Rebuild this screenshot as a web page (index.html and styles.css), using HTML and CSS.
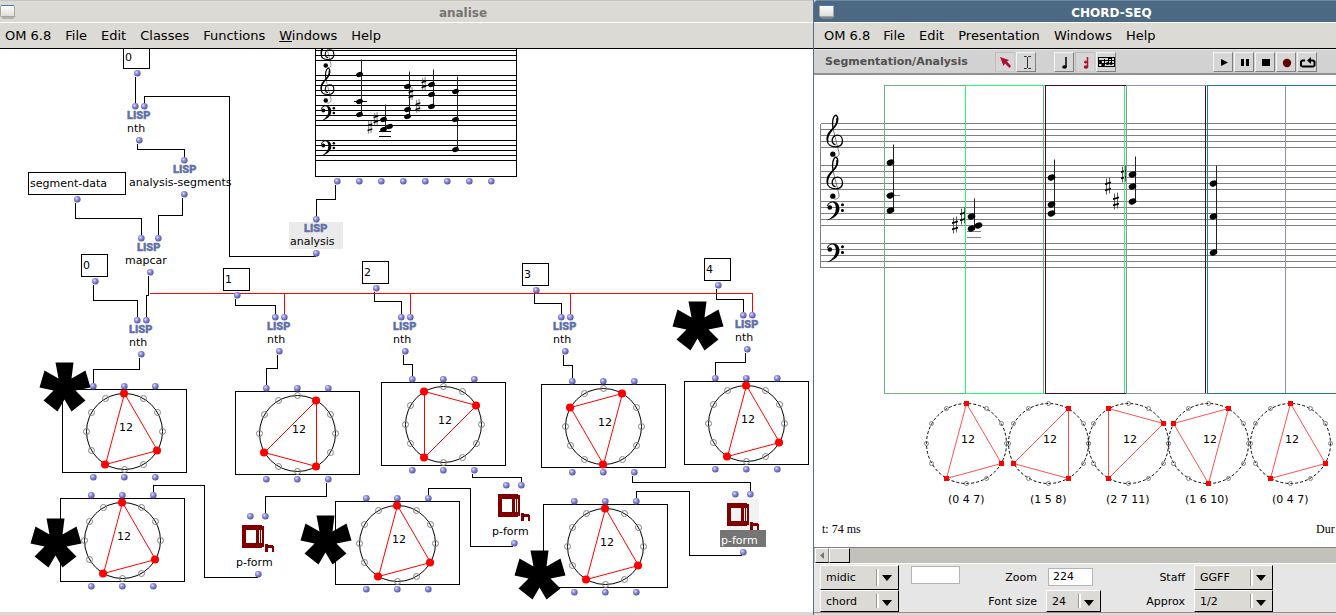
FILE: index.html
```html
<!DOCTYPE html>
<html lang="en">
<head>
<meta charset="utf-8">
<title>OM 6.8</title>
<link rel="stylesheet" href="styles.css">
</head>
<body>
<svg class="defs" aria-hidden="true">
  <defs>
    <radialGradient id="ball" cx=".38" cy=".36" r=".7">
      <stop offset="0" stop-color="#e0e0ff"/><stop offset=".4" stop-color="#8c8ce0"/><stop offset="1" stop-color="#4c4c98"/>
    </radialGradient>
    <circle id="port" cx="-.2" cy="-.2" r="3.300" fill="url(#ball)"/>
    <path id="star" d="M-10 0H8L6 16 20 8 25 25 10 28 20 38 6 49 -1 37 -8 49 -22 38 -12 28 -26 25 -21 8 -7 16Z"/>
    <g id="ports">
      <use href="#port" x="31" y="-3"/><use href="#port" x="62" y="-3"/><use href="#port" x="93" y="-3"/>
      <use href="#port" x="31" y="88"/><use href="#port" x="62" y="88"/><use href="#port" x="93" y="88"/>
    </g>
    <g id="ring">
      <rect class="box crisp" width="124" height="83"/>
      <circle class="hoop" cx="62" cy="42" r="38"/>
      <g class="hollow">
        <circle cx="62" cy="4" r="3"/><circle cx="81" cy="9" r="3"/><circle cx="95" cy="23" r="3"/><circle cx="100" cy="42" r="3"/>
        <circle cx="95" cy="61" r="3"/><circle cx="81" cy="75" r="3"/><circle cx="62" cy="80" r="3"/><circle cx="43" cy="75" r="3"/>
        <circle cx="29" cy="61" r="3"/><circle cx="24" cy="42" r="3"/><circle cx="29" cy="23" r="3"/><circle cx="43" cy="9" r="3"/>
      </g>
      <use href="#ports"/>
    </g>
    <g id="ring047"><use href="#ring"/><path class="tri" d="M62 4 95 61 43 75Z"/>
      <circle class="hit" cx="61.500" cy="4" r="4"/><circle class="hit" cx="94.500" cy="61" r="4"/><circle class="hit" cx="42.500" cy="75" r="4"/></g>
    <g id="ring158"><use href="#ring"/><path class="tri" d="M81 9V75L29 61Z"/>
      <circle class="hit" cx="80.500" cy="9" r="4"/><circle class="hit" cx="80.500" cy="75" r="4"/><circle class="hit" cx="28.500" cy="61" r="4"/></g>
    <g id="ring2711"><use href="#ring"/><path class="tri" d="M95 23 43 75V9Z"/>
      <circle class="hit" cx="94.500" cy="23" r="4"/><circle class="hit" cx="42.500" cy="75" r="4"/><circle class="hit" cx="42.500" cy="9" r="4"/></g>
    <g id="ring1610"><use href="#ring"/><path class="tri" d="M81 9 62 80 29 23Z"/>
      <circle class="hit" cx="80.500" cy="9" r="4"/><circle class="hit" cx="61.500" cy="80" r="4"/><circle class="hit" cx="28.500" cy="23" r="4"/></g>
    <g id="pform">
      <g class="crisp" transform="translate(-.5 -.5)"><path fill="#800000" fill-rule="evenodd" d="M0 0H20V1H22V22H20V23H0ZM4 5V18H14V5ZM17 5V18H18V5ZM19 5V18H20V5Z"/>
      <path fill="#800000" d="M23 19H26V20H31V21H32V27H30V23H26V27H23Z"/></g>
      <use href="#port" x="8" y="-9"/><use href="#port" x="23" y="-9"/>
    </g>
    <g id="treble">
      <path fill="none" stroke="#000" stroke-width="4" d="M20 44C15 22 20 5 28 2C37 6 35 24 27 34C16 48 2 58 2 76C2 90 13 97 27 97C41 97 48 89 48 79C48 68 41 62 33 62C23 62 17 70 17 78C17 85 21 89 27 91"/>
      <path d="M33 8C38 26 20 42 14 52C6 62 4 72 6 84C-2 78 -1 62 6 54C14 42 32 32 29 12Z"/>
      <path fill="none" stroke="#000" stroke-width="1.500" d="M20 44 37 112C40 122 34 129 24 128"/>
      <circle cx="19" cy="119" r="8"/>
    </g>
    <g id="bass">
      <circle cx="10" cy="18" r="7"/><circle cx="48" cy="10" r="4.500"/><circle cx="48" cy="27" r="4.500"/>
      <path d="M1 16C3 4 11 0 19 0C31 0 39 8 39 21C39 40 20 52 1 57C16 48 28 38 28 21C28 10 24 3 18 3C11 3 7 6 5 12Z"/>
    </g>
    <ellipse id="head" rx="3.900" ry="2.900" transform="rotate(-22)"/>
    <ellipse id="shead" rx="3.500" ry="2.500" transform="rotate(-22)"/>
    <g id="sharp"><path fill="none" stroke="#333" stroke-width=".8" d="M-1 -7V9M2 -8V8"/><path d="M-2.500 -2.200 3.500 -4V-2.200L-2.500 -.4ZM-2.500 4 3.500 2.200V4L-2.500 5.800Z"/></g>
    <g id="dial">
      <circle class="dash" r="40"/>
      <g class="hollow">
        <circle cy="-40" r="2"/><circle cx="20" cy="-35" r="2"/><circle cx="35" cy="-20" r="2"/><circle cx="40" r="2"/>
        <circle cx="35" cy="20" r="2"/><circle cx="20" cy="35" r="2"/><circle cy="40" r="2"/><circle cx="-20" cy="35" r="2"/>
        <circle cx="-35" cy="20" r="2"/><circle cx="-40" r="2"/><circle cx="-35" cy="-20" r="2"/><circle cx="-20" cy="-35" r="2"/>
      </g>
    </g>
    <path id="dot" class="hit" d="M-2.500 -2.500H2.500V2.500H-2.500Z"/>
    <g id="dial047"><use href="#dial"/><path class="tri pale" d="M0 -40 35 20 -20 35Z"/><use href="#dot" y="-40"/><use href="#dot" x="35" y="20"/><use href="#dot" x="-20" y="35"/></g>
    <linearGradient id="pane" x2="0" y2="1"><stop offset="0" stop-color="#fff"/><stop offset="1" stop-color="#dcdcd8"/></linearGradient>
    <g id="winicon"><path fill="#9a9a96" d="M0 11H16L13 14H3Z" opacity=".6"/><rect x=".5" y=".5" width="14" height="11" rx="1" fill="url(#pane)" stroke="#a4a4a0"/><path fill="#4a78b8" d="M1 0H14V1H1Z"/></g>
  </defs>
</svg>

<main class="desk">
  <section class="window patch">
    <header class="titlebar">
      <svg class="winicon"><use href="#winicon"/></svg>
      <h1>analise</h1>
    </header>
    <nav class="menubar">
      <button>OM 6.8</button><button>File</button><button>Edit</button><button>Classes</button><button>Functions</button><button><u>W</u>indows</button><button>Help</button>
    </nav>
    <svg class="canvas" role="img" aria-label="Patch diagram">
      <g transform="translate(0 -49)">
        <rect x="289" y="222" width="54" height="27" fill="#ebebeb"/>
        <rect x="727" y="499" width="32" height="31" fill="#f2f2f2"/>
        <rect x="720" y="530" width="46" height="17" fill="#757575"/>
        <g transform="translate(.5 .5)">
          <g class="box crisp">
            <rect x="123" y="46" width="26" height="22"/><rect x="28" y="172" width="97" height="22"/>
            <rect x="81" y="254" width="26" height="22"/><rect x="223" y="268" width="26" height="22"/>
            <rect x="362" y="261" width="26" height="22"/><rect x="522" y="263" width="26" height="22"/>
            <rect x="704" y="258" width="26" height="22"/><rect x="315" y="40" width="201" height="136"/>
            <path d="M315 50H516M315 55H516M315 60H516M315 75H516M315 80H516M315 85H516M315 90H516M315 95H516M315 105H516M315 110H516M315 115H516M315 120H516M315 125H516M315 140H516M315 145H516M315 150H516M315 155H516M315 160H516"/>
            <path d="M353 101H366M378 131H390M378 136H390"/>
            <path d="M135 76V102M144 102V96H229V256H315M137 143V149H184V156M182 197V215H158V234M75 202V218H141V234M148 275V295H146V316M93 284V300H137V316M139 357V369H93V382M235 298V305H275V313M277 354V368H266V384M374 291V301H401V313M403 354V364H412V375M534 293V303H561V313M563 354V365H572V377M716 288V299H743V311M745 352V362H715V374M335 184V199H316V215"/>
            <path d="M153 491V485H204V577H257M326 482V496H265V512M472 473V477H521V481M428 494V488H470V546H512M632 475V482H750V490M636 497V491H689V555H741"/>
          </g>
          <path class="tri crisp" d="M149 293H752M284 293V313M410 293V313M570 293V313M752 293V311"/>
          <g>
            <use href="#treble" transform="translate(320 32) scale(.278)"/>
            <use href="#treble" transform="translate(320 67) scale(.278)"/>
            <use href="#bass" transform="translate(320 105) scale(.278)"/>
            <use href="#bass" transform="translate(320 140) scale(.278)"/>
            <path class="stem" d="M361 59V114M385 104V129M409 71V116M433 69V106M457 76V149"/>
            <use href="#shead" x="359" y="74"/><use href="#shead" x="359" y="101"/><use href="#shead" x="359" y="114"/>
            <use href="#shead" x="383" y="119"/><use href="#shead" x="389" y="126"/><use href="#shead" x="383" y="129"/>
            <use href="#shead" x="407" y="86"/><use href="#shead" x="407" y="109"/><use href="#shead" x="407" y="116"/>
            <use href="#shead" x="431" y="84"/><use href="#shead" x="431" y="94"/><use href="#shead" x="431" y="106"/>
            <use href="#shead" x="455" y="91"/><use href="#shead" x="455" y="119"/><use href="#shead" x="455" y="149"/>
            <use href="#sharp" transform="translate(375 118) scale(.8)"/><use href="#sharp" transform="translate(369 126) scale(.8)"/>
            <use href="#sharp" transform="translate(423 83) scale(.8)"/><use href="#sharp" transform="translate(410 93) scale(.8)"/><use href="#sharp" transform="translate(417 105) scale(.8)"/>
          </g>
          <use href="#star" x="65" y="362"/><use href="#star" x="56" y="518"/><use href="#star" x="326" y="515"/><use href="#star" x="698" y="301"/>
          <use href="#ring047" x="62" y="389"/><use href="#ring158" x="235" y="391"/><use href="#ring2711" x="381" y="382"/><use href="#ring1610" x="541" y="384"/><use href="#ring047" x="684" y="381"/>
          <use href="#ring047" x="60" y="498"/><use href="#ring047" x="335" y="501"/><use href="#ring047" x="543" y="504"/>
          <use href="#star" x="540" y="550"/>
          <use href="#pform" x="242" y="525"/><use href="#pform" x="498" y="494"/><use href="#pform" x="727" y="503"/>
          <use href="#port" x="137" y="73"/><use href="#port" x="135" y="106"/><use href="#port" x="144" y="106"/><use href="#port" x="139" y="140"/>
          <use href="#port" x="184" y="160"/><use href="#port" x="184" y="194"/><use href="#port" x="77" y="199"/>
          <use href="#port" x="141" y="238"/><use href="#port" x="158" y="238"/><use href="#port" x="150" y="272"/>
          <use href="#port" x="95" y="281"/><use href="#port" x="137" y="320"/><use href="#port" x="146" y="320"/><use href="#port" x="141" y="354"/>
          <use href="#port" x="237" y="295"/><use href="#port" x="275" y="317"/><use href="#port" x="284" y="317"/><use href="#port" x="279" y="351"/>
          <use href="#port" x="376" y="288"/><use href="#port" x="401" y="317"/><use href="#port" x="410" y="317"/><use href="#port" x="405" y="351"/>
          <use href="#port" x="536" y="290"/><use href="#port" x="561" y="317"/><use href="#port" x="570" y="317"/><use href="#port" x="565" y="351"/>
          <use href="#port" x="718" y="285"/><use href="#port" x="743" y="315"/><use href="#port" x="752" y="315"/><use href="#port" x="747" y="349"/>
          <use href="#port" x="337" y="181"/><use href="#port" x="359" y="181"/><use href="#port" x="381" y="181"/><use href="#port" x="403" y="181"/>
          <use href="#port" x="425" y="181"/><use href="#port" x="447" y="181"/><use href="#port" x="469" y="181"/><use href="#port" x="491" y="181"/>
          <use href="#port" x="316" y="219"/><use href="#port" x="316" y="253"/>
          <use href="#port" x="258" y="574"/><use href="#port" x="514" y="543"/><use href="#port" x="743" y="552"/>
        </g>
        <g class="lisp">
          <text x="127" y="119">LISP</text><text x="173" y="173">LISP</text><text x="137" y="251">LISP</text><text x="304" y="232">LISP</text><text x="129" y="333">LISP</text>
          <text x="267" y="330">LISP</text><text x="393" y="330">LISP</text><text x="553" y="330">LISP</text><text x="735" y="328">LISP</text>
        </g>
        <g class="label">
          <text x="125" y="61">0</text><text x="127" y="132">nth</text><text x="129" y="186">analysis-segments</text><text x="30" y="187">segment-data</text>
          <text x="125" y="264">mapcar</text><text x="290" y="245">analysis</text>
          <text x="83" y="269">0</text><text x="225" y="283">1</text><text x="364" y="276">2</text><text x="524" y="278">3</text><text x="706" y="273">4</text>
          <text x="129" y="346">nth</text><text x="267" y="343">nth</text><text x="393" y="343">nth</text><text x="553" y="343">nth</text><text x="735" y="341">nth</text>
          <text x="119" y="431">12</text><text x="292" y="433">12</text><text x="438" y="424">12</text><text x="598" y="426">12</text><text x="741" y="423">12</text>
          <text x="117" y="540">12</text><text x="392" y="543">12</text><text x="600" y="546">12</text>
          <text x="236" y="566">p-form</text><text x="492" y="535">p-form</text><text class="chosen" x="721" y="544">p-form</text>
        </g>
      </g>
    </svg>
  </section>

  <section class="window editor">
    <header class="titlebar">
      <svg class="winicon"><use href="#winicon"/></svg>
      <h1>CHORD-SEQ</h1>
    </header>
    <nav class="menubar">
      <button>OM 6.8</button><button>File</button><button>Edit</button><button>Presentation</button><button>Windows</button><button>Help</button>
    </nav>
    <div class="toolbar">
      <h2>Segmentation/Analysis</h2>
      <div class="tools">
        <button class="down" aria-label="Select"><svg><path fill="#b01030" d="M3 4 12 7 10 8.500 14 13 12.500 15 8 10.500 6.500 13Z"/></svg></button>
        <button aria-label="Text cursor"><svg><path fill="none" stroke="#333" d="M6 3.500H8.500L9.500 4.500 10.500 3.500H13M9.500 4V15M6 15.500H8.500L9.500 14.500 10.500 15.500H13"/></svg></button>
      </div>
      <div class="tools">
        <button aria-label="Note"><svg><path stroke="#000" stroke-width="1.500" d="M10 4V14"/><ellipse cx="8.500" cy="14" rx="2.300" ry="1.700"/></svg></button>
        <button class="down" aria-label="Offset note"><svg><path stroke="#b01030" stroke-width="1.500" d="M10.500 4V14"/><ellipse cx="9" cy="14" rx="2.300" ry="1.800" fill="#b01030"/><circle cx="8.500" cy="9" r="1.500" fill="#b01030"/></svg></button>
        <button aria-label="Score"><svg><path fill="none" stroke="#000" d="M0 4.500H17M0 7.500H17M0 10.500H17M0 13.500H17M.5 4V14M16.500 4V14M6.500 6V12M10.500 5V10M13.500 5V10M10 5.500H14"/><circle cx="5" cy="12" r="1.800"/><circle cx="9.500" cy="10.500" r="1.500"/><circle cx="13" cy="10.500" r="1.500"/><circle cx="2.500" cy="9" r="1.500"/></svg></button>
      </div>
      <div class="tools transport">
        <button aria-label="Play"><svg><path d="M6 6 13 9.500 6 13Z"/></svg></button>
        <button aria-label="Pause"><svg><path d="M5 6H8V13H5ZM10 6H13V13H10Z"/></svg></button>
        <button aria-label="Stop"><svg><path d="M5 6H13V13H5Z"/></svg></button>
        <button aria-label="Record"><svg><circle cx="9" cy="10" r="4.200" fill="#600000"/></svg></button>
        <button aria-label="Loop"><svg><path fill="none" stroke="#000" stroke-width="2" d="M6 7.500H3.500L2 8.500V12.500L3.500 13.500H14L15.500 12.500V8.500L14 7.500H11"/><path d="M12 4V11L8 7.500Z"/></svg></button>
      </div>
    </div>
    <svg class="canvas" role="img" aria-label="Chord sequence">
      <g transform="translate(-814 -75)">
        <g transform="translate(.5 .5)">
          <path class="staff crisp" d="M820 123H4000M820 129H4000M820 135H4000M820 141H4000M820 147H4000M820 165H4000M820 171H4000M820 177H4000M820 183H4000M820 189H4000M820 201H4000M820 207H4000M820 213H4000M820 219H4000M820 225H4000M820 243H4000M820 249H4000M820 255H4000M820 261H4000M820 267H4000M820 123V267M885 195H899M966 231H980M966 237H980"/>
          <use href="#treble" transform="translate(826 114) scale(.333)"/><use href="#treble" transform="translate(826 156) scale(.333)"/>
          <use href="#bass" transform="translate(826 201) scale(.333)"/><use href="#bass" transform="translate(826 243) scale(.333)"/>
          <path class="stem" d="M893 144V210M974 198V228M1054 159V213M1135 156V201M1216 165V252"/>
          <use href="#head" x="890" y="162"/><use href="#head" x="890" y="195"/><use href="#head" x="890" y="210"/>
          <use href="#head" x="971" y="216"/><use href="#head" x="978" y="225"/><use href="#head" x="971" y="228"/>
          <use href="#head" x="1051" y="177"/><use href="#head" x="1051" y="204"/><use href="#head" x="1051" y="213"/>
          <use href="#head" x="1132" y="174"/><use href="#head" x="1132" y="186"/><use href="#head" x="1132" y="201"/>
          <use href="#head" x="1213" y="183"/><use href="#head" x="1213" y="216"/><use href="#head" x="1213" y="252"/>
          <use href="#sharp" x="962" y="215"/><use href="#sharp" x="954" y="224"/><use href="#sharp" x="1123" y="173"/><use href="#sharp" x="1107" y="185"/><use href="#sharp" x="1115" y="200"/>
          <g class="crisp" fill="none">
            <rect x="884" y="85" width="159" height="308" stroke="#70b080"/>
            <rect x="965" y="85" width="159" height="308" stroke="#20ff70"/>
            <rect x="1045" y="85" width="160" height="308" stroke="#401020"/>
            <rect x="1126" y="85" width="159" height="308" stroke="#9090b8"/>
            <path d="M4000 85H1207V393H4000" stroke="#208080"/>
          </g>
          <use href="#dial047" x="966" y="443"/>
          <use href="#dial" x="1048" y="443"/><use href="#dial" x="1128" y="443"/><use href="#dial" x="1208" y="443"/>
          <use href="#dial047" x="1290" y="443"/>
          <path class="tri pale" d="M1068 408V478L1013 463ZM1163 423 1108 478V408ZM1228 408 1208 483 1173 423Z"/>
          <use href="#dot" x="1068" y="408"/><use href="#dot" x="1068" y="478"/><use href="#dot" x="1013" y="463"/>
          <use href="#dot" x="1163" y="423"/><use href="#dot" x="1108" y="478"/><use href="#dot" x="1108" y="408"/>
          <use href="#dot" x="1228" y="408"/><use href="#dot" x="1208" y="483"/><use href="#dot" x="1173" y="423"/>
        </g>
        <g class="label">
          <text x="961" y="443">12</text><text x="1043" y="443">12</text><text x="1123" y="443">12</text><text x="1203" y="443">12</text><text x="1285" y="443">12</text>
          <text x="948" y="503">(0 4 7)</text><text x="1030" y="503">(1 5 8)</text><text x="1106" y="503">(2 7 11)</text><text x="1185" y="503">(1 6 10)</text><text x="1272" y="503">(0 4 7)</text>
        </g>
        <g class="time"><text x="822" y="533">t: 74 ms</text><text x="1316" y="533">Dur</text></g>
      </g>
    </svg>
    <div class="scroll">
      <button class="back" aria-label="Scroll left"><svg><path fill="#777" d="M8 3V10L4 6.500Z"/></svg></button>
      <span class="thumb"></span>
    </div>
    <form class="controls">
      <span class="pick"><select aria-label="Note value"><option>midic</option></select></span>
      <input class="blank" aria-label="Value">
      <label for="zoom">Zoom</label>
      <input id="zoom" class="zoom" value="224">
      <label for="staff">Staff</label>
      <span class="pick"><select id="staff"><option>GGFF</option></select></span>
      <span class="pick"><select aria-label="Edit mode"><option>chord</option></select></span>
      <span></span>
      <label for="size">Font size</label>
      <span class="pick"><select id="size"><option>24</option></select></span>
      <label for="approx">Approx</label>
      <span class="pick"><select id="approx"><option>1/2</option></select></span>
    </form>
  </section>
</main>
</body>
</html>
```
FILE: styles.css
```css
* { box-sizing: border-box; }

body {
  margin: 0;
  background: #dcdad5;
  color: #000;
  font-family: "DejaVu Sans", sans-serif;
  font-size: 11px;
}

button, select, input { font: inherit; color: inherit; }

.defs { position: absolute; width: 0; height: 0; }

.desk {
  display: grid;
  grid-template-columns: 813fr 523fr;
  height: 100vh;
  overflow: hidden;
}

.window {
  display: flex;
  flex-direction: column;
  min-width: 0;
  min-height: 0;
  overflow: hidden;
  background: #dcdad5;
}

.patch { padding-bottom: 3px; }
.editor { border-left: 1px solid #5a7088; padding-bottom: 2px; }

.titlebar {
  display: flex;
  flex: none;
  align-items: center;
  height: 23px;
  border-top: 1px solid #c8c6c2;
  border-bottom: 1px solid #fff;
  color: #757571;
}

.titlebar h1 {
  flex: 1;
  margin: 0;
  padding: 3px 0 0 97px;
  font-size: 12px;
  line-height: 18px;
  text-align: center;
}

.editor .titlebar {
  padding-left: 5px;
  border-top-color: #6d8aa4;
  border-top-left-radius: 4px;
  background: #4b6983;
  color: #fff;
}

.editor .titlebar h1 { padding-left: 52px; }

.winicon { width: 16px; height: 14px; }

.menubar {
  display: flex;
  flex: none;
  height: 26px;
  border-bottom: 1px solid #000;
}

.editor .menubar { padding-left: 3px; }

.menubar button {
  padding: 1px 7px 0;
  border: 0;
  background: none;
  font-size: 13px;
  line-height: 24px;
}

.patch .menubar button:first-child { padding-left: 5px; }
.editor .menubar button:first-child { padding-right: 6px; }

.canvas {
  display: block;
  flex: 1;
  width: 100%;
  min-height: 0;
  overflow: hidden;
  background: #fff;
}

.crisp { shape-rendering: crispEdges; }
.box { fill: none; stroke: #000; }
.hoop { fill: none; stroke: #000; }
.hollow { fill: none; stroke: #808080; }
.hit { fill: #f00; }
.tri { fill: none; stroke: #f00; }
.pale { stroke: #ff5050; }
.stem { fill: none; stroke: #222; }
.staff { fill: none; stroke: #808080; }
.dash { fill: none; stroke: #000; stroke-dasharray: 3 2; }

.label { font-size: 11px; }
.chosen { fill: #fff; }
.time { font: 12px "Liberation Serif", serif; }

.lisp {
  font: 900 11px Roboto, sans-serif;
  fill: #6070a8;
  stroke: #6070a8;
  stroke-width: .4px;
}

.toolbar {
  display: flex;
  flex: none;
  align-items: center;
  gap: 18px;
  height: 26px;
  padding-left: 11px;
  border-top: 1px solid #e6e6e6;
  border-bottom: 2px solid #909090;
  background: #d2d2d2;
}

.toolbar h2 {
  width: 152px;
  margin: 0;
  color: #505050;
  font-size: 11px;
  line-height: 20px;
  white-space: nowrap;
}

.tools { display: flex; gap: 1px; }
.transport { margin-left: 79px; }

.tools button {
  width: 20px;
  height: 20px;
  padding: 0 0 0 1px;
  border: 1px solid;
  border-color: #f4f4f4 #808080 #808080 #f4f4f4;
  background: #d6d6d6;
}

.tools .down { border-color: #bcbcbc #c8c8c8 #c8c8c8 #bcbcbc; }
.tools svg { display: block; width: 17px; height: 18px; }

.scroll {
  display: flex;
  flex: none;
  height: 16px;
  padding-left: 1px;
  border-top: 1px solid #808080;
  background: #c3c1bc;
}

.back, .thumb {
  flex: none;
  padding: 0;
  border: 1px solid;
  border-color: #fff #000 #000 #fff;
  background: #dcdad5;
}

.back { width: 14px; border-right-color: #888; }
.back svg { display: block; width: 12px; height: 13px; }
.thumb { width: 21px; }

.controls {
  display: grid;
  flex: none;
  grid-template-columns: 79px 52px 68px 55px 75px 79px;
  grid-template-rows: 25px 22px;
  column-gap: 9px;
  align-items: center;
  padding: 1px 0 0 6px;
  border-top: 1px solid #fff;
  border-bottom: 1px solid #909090;
  background: #e6e6e6;
}

.controls label { text-align: right; white-space: nowrap; }

.controls input {
  height: 18px;
  padding: 0 4px;
  border: 1px solid #b4b4b4;
  background: #fff;
}

.blank { justify-self: end; align-self: start; width: 49px; margin-top: 1px; }
.zoom { width: 45px; margin: 0 0 2px 2px; }

.pick {
  position: relative;
  align-self: stretch;
  border: 1px solid;
  border-color: #fff #000 #000 #fff;
  background: #dcdad5;
}

.pick select {
  width: 100%;
  height: 100%;
  padding: 0 24px 0 5px;
  border: 0;
  appearance: none;
  background: none;
}

.pick::before, .pick::after {
  position: absolute;
  content: "";
  pointer-events: none;
}

.pick::before {
  top: 3px;
  right: 19px;
  bottom: 3px;
  width: 2px;
  border-left: 1px solid #9a9892;
  background: #fff;
}

.pick::after {
  top: 9px;
  right: 6px;
  border: 5px solid transparent;
  border-top: 6px solid #000;
  border-bottom: 0;
}
```
